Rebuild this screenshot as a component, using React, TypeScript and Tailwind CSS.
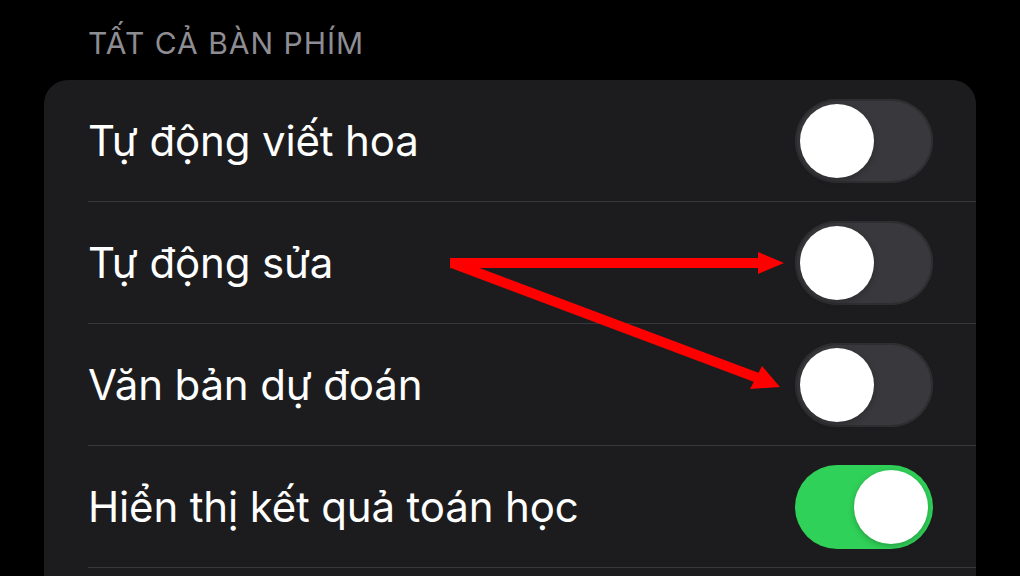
import { useState } from 'react';

type Row = { label: string; on: boolean };

const ROWS: Row[] = [
  { label: 'Tự động viết hoa', on: false },
  { label: 'Tự động sửa', on: false },
  { label: 'Văn bản dự đoán', on: false },
  { label: 'Hiển thị kết quả toán học', on: true },
];

function Toggle({ on, onChange }: { on: boolean; onChange: () => void }) {
  return (
    <button
      onClick={onChange}
      className={`flex h-[84px] w-[138px] shrink-0 items-center rounded-full px-[5px] ${
        on ? 'justify-end bg-[#30d158]' : 'justify-start bg-[#39393d] ring-[2px] ring-inset ring-[#2e2e31]'
      }`}
    >
      <span className="block h-[74px] w-[74px] rounded-full bg-white shadow-[0_2px_6px_rgba(0,0,0,0.25)]" />
    </button>
  );
}

export default function App() {
  const [rows, setRows] = useState(ROWS);

  const flip = (i: number) =>
    setRows((r) => r.map((row, j) => (j === i ? { ...row, on: !row.on } : row)));

  return (
    <div
      className="relative h-[576px] w-[1020px] overflow-hidden bg-black"
      style={{ fontFamily: 'Inter, "Noto Sans", sans-serif' }}
    >
      {/* Section header */}
      <div className="pl-[88px] pt-[25px] text-[30px] leading-[36px] tracking-[1px] text-[#8d8d93]">
        TẤT CẢ BÀN PHÍM
      </div>

      {/* Settings group */}
      <div className="mx-[44px] mt-[19px] rounded-[24px] bg-[#1c1c1e] pb-[60px]">
        {rows.map((row, i) => (
          <div key={row.label} className="pl-[44px]">
            <div className="flex h-[121px] items-center justify-between pr-[43px]">
              <span className="text-[42px] tracking-[-0.15px] text-white">{row.label}</span>
              <Toggle on={row.on} onChange={() => flip(i)} />
            </div>
            <div className="h-px bg-[#38383a]" />
          </div>
        ))}
      </div>

      {/* Annotation arrows */}
      <svg className="pointer-events-none absolute inset-0" width="1020" height="576" viewBox="0 0 1020 576">
        <line x1="450" y1="263" x2="762" y2="263" stroke="#ff0000" strokeWidth="10" />
        <polygon points="758,252 784,263 758,274" fill="#ff0000" />
        <line x1="452" y1="263" x2="758" y2="378" stroke="#ff0000" strokeWidth="10" />
        <polygon points="762,366 780,387 750,389" fill="#ff0000" />
      </svg>
    </div>
  );
}
